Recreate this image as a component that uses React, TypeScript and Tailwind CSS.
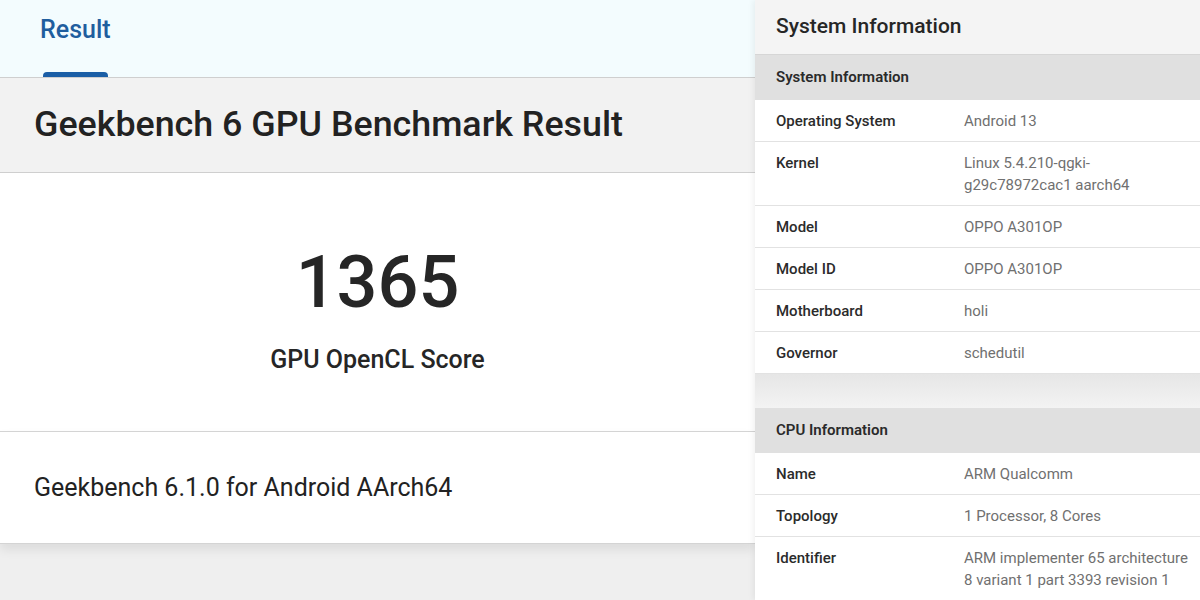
const systemRows = [
  { label: "Operating System", value: ["Android 13"] },
  { label: "Kernel", value: ["Linux 5.4.210-qgki-", "g29c78972cac1 aarch64"] },
  { label: "Model", value: ["OPPO A301OP"] },
  { label: "Model ID", value: ["OPPO A301OP"] },
  { label: "Motherboard", value: ["holi"] },
  { label: "Governor", value: ["schedutil"] },
];

const cpuRows = [
  { label: "Name", value: ["ARM Qualcomm"] },
  { label: "Topology", value: ["1 Processor, 8 Cores"] },
  { label: "Identifier", value: ["ARM implementer 65 architecture", "8 variant 1 part 3393 revision 1"] },
];

function InfoRow({ label, value }: { label: string; value: string[] }) {
  return (
    <div className="flex border-b border-[#e2e2e2] bg-white pb-[9px] pl-[21px] pt-[10px] text-[15px] leading-[22px]">
      <div className="w-[188px] shrink-0 font-medium text-[#2b2b2b]">{label}</div>
      <div className="text-[#707070]">
        {value.map((line, i) => (
          <div key={i}>{line}</div>
        ))}
      </div>
    </div>
  );
}

function SectionHeader({ title }: { title: string }) {
  return (
    <div className="flex h-[45px] items-center bg-[#e0e0e0] pl-[21px] text-[15px] font-semibold text-[#2a2a2a]">
      {title}
    </div>
  );
}

export default function App() {
  return (
    <div
      className="flex h-[600px] w-[1200px] overflow-hidden bg-[#efefef]"
      style={{ fontFamily: "Roboto, 'Liberation Sans', sans-serif" }}
    >
      {/* left: result card */}
      <div className="flex w-[755px] shrink-0 flex-col">
        <div className="flex h-[77px] flex-col bg-[#f3fcfe] pl-[40px]">
          <div className="pt-[14px] text-[25px] font-medium leading-[32px] text-[#1f5e9e]">Result</div>
          <div className="ml-[3px] mt-auto h-[5px] w-[65px] rounded-t-[4px] bg-[#1a5ea6]" />
        </div>
        <div className="flex h-[96px] items-center border-y border-[#cfcfcf] bg-[#f2f2f2] pl-[34px] text-[35.8px] font-medium text-[#222]">
          Geekbench 6 GPU Benchmark Result
        </div>
        <div className="flex h-[258px] flex-col items-center bg-white pt-[74px] text-[#262626]">
          <div className="text-[72px] font-medium leading-[72px]">1365</div>
          <div className="mt-[24px] text-[25px] font-medium leading-[34px]">GPU OpenCL Score</div>
        </div>
        <div className="flex h-[113px] items-center border-y border-[#d4d4d4] bg-white pl-[34px] text-[25px] text-[#222] shadow-[0_6px_10px_rgba(0,0,0,0.08)]">
          Geekbench 6.1.0 for Android AArch64
        </div>
      </div>

      {/* right: system information */}
      <div className="flex-1 shadow-[-2px_0_6px_rgba(0,0,0,0.06)]">
        <div className="flex h-[55px] items-center border-b border-[#d6d6d6] bg-[#f4f4f4] pl-[21px] text-[21px] font-medium text-[#262626]">
          System Information
        </div>
        <SectionHeader title="System Information" />
        {systemRows.map((r) => (
          <InfoRow key={r.label} label={r.label} value={r.value} />
        ))}
        <div className="h-[34px] bg-gradient-to-b from-[#e6e6e6] to-[#f3f3f3]" />
        <SectionHeader title="CPU Information" />
        {cpuRows.map((r) => (
          <InfoRow key={r.label} label={r.label} value={r.value} />
        ))}
      </div>
    </div>
  );
}
